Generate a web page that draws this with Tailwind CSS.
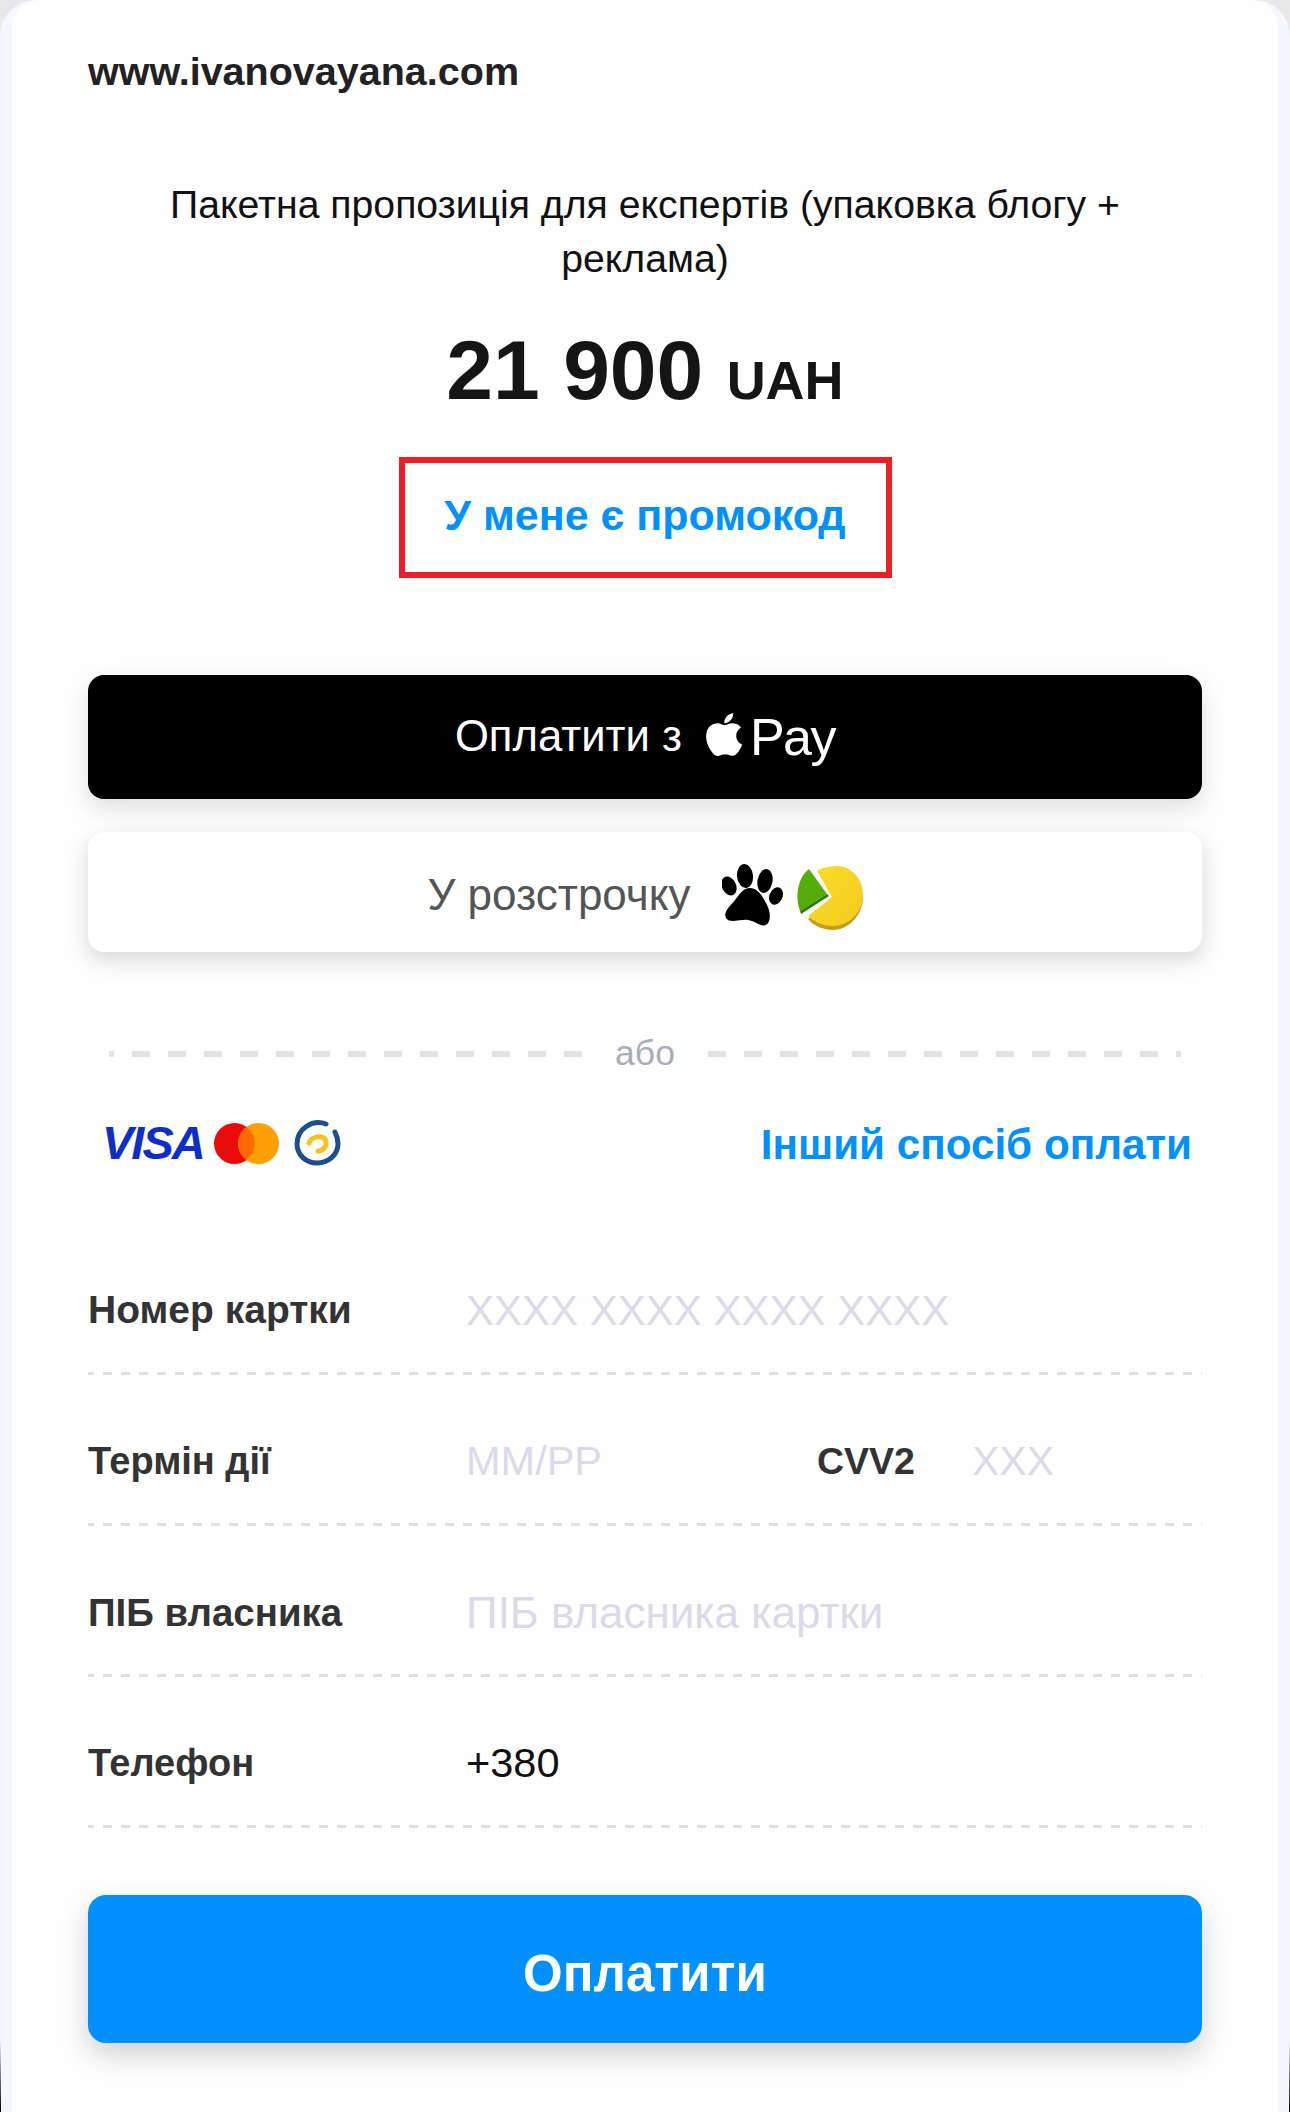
<!DOCTYPE html>
<html lang="uk">
<head>
    <meta charset="UTF-8">
    <title>Оплата</title>
    <script src="https://cdn.jsdelivr.net/npm/@tailwindcss/browser@4"></script>
</head>
<body class="bg-[#e8e8e8] font-['Liberation_Sans',Arial,sans-serif] overflow-hidden">
<div class="relative w-[1290px] h-[2112px] px-[12px] bg-[#f4f8fe] rounded-t-[36px]">
    <!-- thin dark slivers at the bottom edges of the device frame -->
    <div class="absolute left-0 bottom-0 w-[1px] h-[72px] bg-gradient-to-b from-transparent to-black"></div>
    <div class="absolute right-0 bottom-0 w-[1px] h-[72px] bg-gradient-to-b from-transparent to-black"></div>

    <div class="bg-[#fefefe] rounded-t-[28px] h-full px-[76px] flex flex-col">

        <!-- header -->
        <div class="pt-[49px] h-[178px] text-[39.5px] leading-[44px] font-bold text-[#222222]">www.ivanovayana.com</div>

        <!-- title + price -->
        <p class="text-center text-[39.2px] leading-[54px] text-[#111111] px-[60px]">Пакетна пропозиція для експертів (упаковка блогу + реклама)</p>
        <div class="text-center h-[171px] pt-[39px] leading-[90px] font-bold text-[#151515] text-[84px]">21 900 <span class="text-[54px]">UAH</span></div>

        <!-- promo -->
        <div class="flex justify-center">
            <div class="w-[493px] h-[121px] pb-[5px] border-[6px] border-[#ee1c25] flex items-center justify-center text-[43px] font-bold text-[#0091ff]">У мене є промокод</div>
        </div>

        <!-- apple pay -->
        <div class="mt-[97px] h-[124px] rounded-[16px] bg-black shadow-[0_10px_24px_rgba(0,0,0,0.12)] flex items-center justify-center text-white">
            <span class="text-[43.6px]">Оплатити з</span>
            <svg class="ml-[22px] w-[38px] h-[43px] -mt-[6px]" viewBox="3.5 3 16 18" fill="#ffffff"><path d="M17.05 20.28c-.98.95-2.05.8-3.08.35-1.09-.46-2.09-.48-3.24 0-1.44.62-2.2.44-3.06-.35C2.79 15.25 3.51 7.59 9.05 7.31c1.35.07 2.29.74 3.08.8 1.18-.24 2.31-.93 3.57-.84 1.51.12 2.65.72 3.4 1.8-3.12 1.87-2.38 5.98.48 7.13-.57 1.5-1.31 2.99-2.54 4.09zM12.03 7.25c-.15-2.23 1.66-4.07 3.74-4.25.29 2.58-2.34 4.5-3.74 4.25z"/></svg>
            <span class="ml-[8px] text-[52px] tracking-[-1.5px]">Pay</span>
        </div>

        <!-- installments -->
        <div class="mt-[33px] h-[120px] rounded-[16px] bg-white shadow-[0_8px_22px_rgba(0,0,0,0.16)] flex items-center justify-center text-[44px] text-[#555555]">
            <span class="pt-[5px]">У розстрочку</span>
            <svg class="ml-[31px] mt-[6px] w-[61px] h-[62px]" viewBox="0 0 61 62" fill="#000000">
                <ellipse cx="7" cy="22" rx="7" ry="10" transform="rotate(-25 7 22)"/>
                <ellipse cx="23" cy="12" rx="8" ry="12" transform="rotate(-6 23 12)"/>
                <ellipse cx="43" cy="17" rx="7.5" ry="12" transform="rotate(10 43 17)"/>
                <ellipse cx="54" cy="32" rx="6.5" ry="9" transform="rotate(25 54 32)"/>
                <path d="M28 24C36 24 41 33 45 41C49 49 49 58 44 61C39 63 33 57 26 56C18 55 8 60 4 54C1 48 8 42 13 36C18 30 21 24 28 24z"/>
            </svg>
            <svg class="ml-[13px] mt-[11px] w-[67px] h-[64px]" viewBox="0 0 67 64">
                <defs>
                    <linearGradient id="pieyellow" x1="0" y1="0" x2="1" y2="1">
                        <stop offset="0" stop-color="#f9de2c"/>
                        <stop offset="1" stop-color="#f4ca1c"/>
                    </linearGradient>
                </defs>
                <path d="M12 53C18 60 27 64 37 64C53 64 67 48 67 31L36 34z" fill="#c99a18"/>
                <path d="M21 5C27 1 36 0 42 0C57 1 67 14 67 29C67 46 53 60 37 60C27 60 18 56 12 50L36 31z" fill="url(#pieyellow)"/>
                <path d="M13 3L31 28L4 45C-1 32 1 12 13 3z" fill="#55ad0a"/>
                <path d="M31 28L4 45L5 48L33 30z" fill="#2e7a08"/>
            </svg>
        </div>

        <!-- divider -->
        <div class="mt-[87px] h-[30px] flex items-center px-[21px]">
            <div class="flex-1 h-[6px] bg-[linear-gradient(90deg,transparent_18px,#e3e3e3_18px)] bg-[length:36px_6px] bg-right"></div>
            <span class="w-[126px] text-center text-[35.5px] text-[#a9adb8]">або</span>
            <div class="flex-1 h-[6px] bg-[linear-gradient(90deg,#e3e3e3_18px,transparent_18px)] bg-[length:36px_6px] bg-left"></div>
        </div>

        <!-- card logos -->
        <div class="mt-[44px] h-[60px] flex items-center justify-between pl-[14px] pr-[10px]">
            <div class="flex items-center">
                <span class="text-[47px] font-bold italic text-[#0c2fc9] tracking-[-2px]">VISA</span>
                <svg class="ml-[10px] w-[65px] h-[41px]" viewBox="0 0 65 41">
                    <circle cx="20.5" cy="20.5" r="20.5" fill="#eb0a0a"/>
                    <circle cx="44.5" cy="20.5" r="20.5" fill="#fba000"/>
                    <path d="M32.5 4a20.5 20.5 0 0 1 0 33a20.5 20.5 0 0 1 0-33z" fill="#ff6a00"/>
                </svg>
                <svg class="ml-[15px] w-[47px] h-[46px]" viewBox="0 0 47 46" fill="none" stroke-linecap="round">
                    <path d="M32 4C18-1 3 9 3 24C3 35 12 43 23 43C34 43 44 35 44 24C44 19 43 16 41 12" stroke="#1c4d8c" stroke-width="5"/>
                    <path d="M15 23C17 16 31 14 32 22C33 27 28 31 24 31" stroke="#f7c21a" stroke-width="5"/>
                </svg>
            </div>
            <span class="pt-[4px] text-[42.2px] font-bold text-[#0091ff]">Інший спосіб оплати</span>
        </div>

        <!-- form -->
        <div class="mt-[51px] flex flex-col font-bold text-[#333333]">
            <div class="h-[151px] pt-[22px] flex items-center bg-[linear-gradient(90deg,#e0e0e0_9px,transparent_9px)] bg-[length:18px_3px] bg-repeat-x bg-[position:-3px_100%]">
                <span class="w-[378px] text-[39px]">Номер картки</span>
                <span class="text-[42px] font-normal text-[#dcdae9]">XXXX XXXX XXXX XXXX</span>
            </div>
            <div class="h-[151px] pt-[22px] flex items-center bg-[linear-gradient(90deg,#e0e0e0_9px,transparent_9px)] bg-[length:18px_3px] bg-repeat-x bg-[position:-3px_100%]">
                <span class="w-[378px] text-[38px]">Термін дії</span>
                <span class="w-[351px] text-[41.5px] font-normal text-[#dcdae9]">ММ/РР</span>
                <span class="w-[155px] text-[37.5px]">CVV2</span>
                <span class="text-[41px] font-normal text-[#dcdae9]">XXX</span>
            </div>
            <div class="h-[151px] pt-[22px] flex items-center bg-[linear-gradient(90deg,#e0e0e0_9px,transparent_9px)] bg-[length:18px_3px] bg-repeat-x bg-[position:-3px_100%]">
                <span class="w-[378px] text-[38.4px]">ПІБ власника</span>
                <span class="text-[44px] font-normal text-[#dcdae9]">ПІБ власника картки</span>
            </div>
            <div class="h-[151px] pt-[22px] flex items-center bg-[linear-gradient(90deg,#e0e0e0_9px,transparent_9px)] bg-[length:18px_3px] bg-repeat-x bg-[position:-3px_100%]">
                <span class="w-[378px] text-[38px]">Телефон</span>
                <span class="text-[41.5px] font-normal text-[#111111]">+380</span>
            </div>
        </div>

        <!-- pay -->
        <div class="mt-[67px] h-[148px] pt-[10px] rounded-[18px] bg-[#0090ff] shadow-[0_12px_28px_rgba(0,0,0,0.18)] flex items-center justify-center text-white font-bold text-[51px]">Оплатити</div>
    </div>
</div>
</body>
</html>
